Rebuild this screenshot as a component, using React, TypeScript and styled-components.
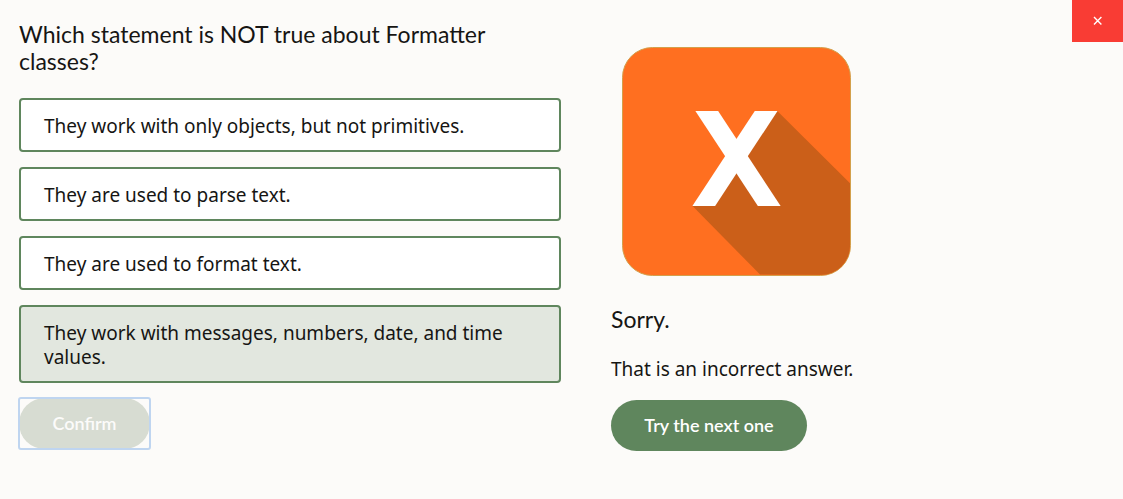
import React, { useState } from "react";
import styled, { createGlobalStyle } from "styled-components";

const displayFont = `Lato, "Noto Sans", sans-serif`;
const textFont = `"Noto Sans", "Open Sans", sans-serif`;

const GlobalStyle = createGlobalStyle`
  *, *::before, *::after { box-sizing: border-box; }
  body {
    margin: 0;
    background: #fcfbf9;
    color: #161513;
    font-family: ${textFont};
    font-size: 19px;
    line-height: 24px;
  }
  button { font: inherit; cursor: pointer; }
`;

const Page = styled.div`
  display: flex;
  flex-direction: column;
  min-height: 100vh;
`;

const TopBar = styled.header`
  display: flex;
  justify-content: flex-end;
  height: 21px;
`;

const CloseButton = styled.button`
  flex: none;
  display: flex;
  align-items: center;
  justify-content: center;
  width: 51px;
  height: 42px;
  padding: 0;
  border: 0;
  background: #f93c34;
  color: #fff;
`;

const Columns = styled.main`
  display: grid;
  grid-template-columns: 1fr 1fr;
  column-gap: 1px;
`;

const Quiz = styled.section`
  padding-left: 19px;
`;

const Result = styled.section`
  padding: 26px 0 0 49px;
`;

const Heading = styled.h1`
  margin: 0 0 23px;
  font-family: ${displayFont};
  font-size: 23px;
  line-height: 27px;
  font-weight: 400;
`;

const Options = styled.div`
  display: flex;
  flex-direction: column;
  gap: 15px;
  margin-bottom: 15px;
`;

const Option = styled.button<{ $selected: boolean }>`
  width: 100%;
  padding: 14px 23px 12px;
  border: 2px solid #5f865d;
  border-radius: 4px;
  background: ${(p) => (p.$selected ? "#e2e7df" : "#fff")};
  color: inherit;
  text-align: left;
`;

const PillButton = styled.button<{ $wide?: boolean }>`
  min-width: ${(p) => (p.$wide ? "196px" : "131px")};
  height: 51px;
  padding: 0 24px 2px;
  border: 0;
  border-radius: 26px;
  background: #5f865d;
  color: #fff;
  font-family: ${displayFont};
  font-size: 18px;
  font-weight: 600;

  &[aria-disabled="true"] {
    background: #d7dcd2;
    color: #fcfbfa;
    cursor: default;
  }
`;

const FocusRing = styled.div`
  display: flex;
  width: fit-content;
  border-radius: 2px;
  outline: 2px solid #bfd5f0;
  outline-offset: -1px;
`;

const Badge = styled.svg`
  display: block;
  margin: 0 0 30px 11px;
`;

const Verdict = styled.h2`
  margin: 0 0 24px;
  font-family: ${displayFont};
  font-size: 23px;
  line-height: 27px;
  font-weight: 400;
`;

const Message = styled.p`
  margin: 0 0 19px;
`;

const answers = [
  "They work with only objects, but not primitives.",
  "They are used to parse text.",
  "They are used to format text.",
  "They work with messages, numbers, date, and time values.",
];

function IncorrectBadge() {
  return (
    <Badge width="229" height="229" viewBox="0 0 229 229" role="img" aria-label="Incorrect">
      <defs>
        <clipPath id="tile">
          <rect x="1" y="1" width="227" height="227" rx="29" />
        </clipPath>
        <clipPath id="crossBand">
          <rect x="60" y="64" width="110" height="95" />
        </clipPath>
      </defs>
      <rect x="0.5" y="0.5" width="228" height="228" rx="30" fill="#ff6f20" stroke="#d3a04c" />
      <path d="M155.3 64L228 136.3V228L138 227.5L70.3 158.8L114 110Z" fill="#cb5f19" clipPath="url(#tile)" />
      <g clipPath="url(#crossBand)" stroke="#fff" strokeWidth="19">
        <path d="M71.6 44L160.2 178.7" />
        <path d="M157.3 44L68.8 178.7" />
      </g>
    </Badge>
  );
}

export default function App() {
  const [selected, setSelected] = useState(3);

  return (
    <>
      <GlobalStyle />
      <Page>
        <TopBar>
          <CloseButton aria-label="Close">
            <svg width="10" height="10" viewBox="0 0 10 10" stroke="currentColor" strokeWidth="1.4">
              <path d="M1 1L8.4 8.4M8.4 1L1 8.4" />
            </svg>
          </CloseButton>
        </TopBar>
        <Columns>
          <Quiz>
            <Heading>Which statement is NOT true about Formatter classes?</Heading>
            <Options>
              {answers.map((answer, i) => (
                <Option
                  key={answer}
                  type="button"
                  $selected={i === selected}
                  aria-pressed={i === selected}
                  onClick={() => setSelected(i)}
                >
                  {answer}
                </Option>
              ))}
            </Options>
            <FocusRing>
              <PillButton type="button" aria-disabled="true">
                Confirm
              </PillButton>
            </FocusRing>
          </Quiz>
          <Result>
            <IncorrectBadge />
            <Verdict>Sorry.</Verdict>
            <Message>That is an incorrect answer.</Message>
            <PillButton type="button" $wide>
              Try the next one
            </PillButton>
          </Result>
        </Columns>
      </Page>
    </>
  );
}
